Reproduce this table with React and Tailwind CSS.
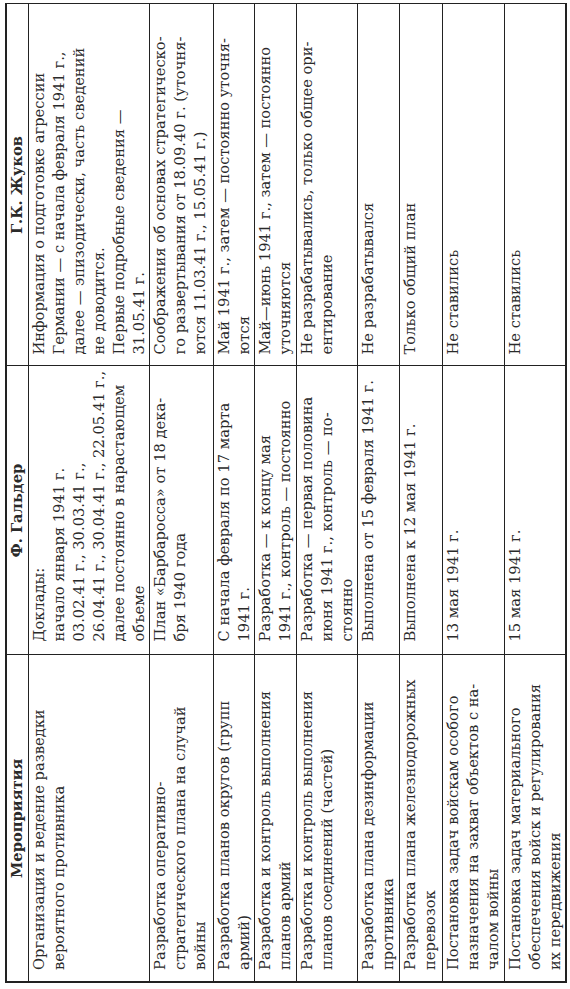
const rows = [
  {
    h: 'h-[121px]',
    m: ['Организация и ведение разведки', 'вероятного противника'],
    g: [
      'Доклады:',
      'начало января 1941 г.',
      '03.02.41 г., 30.03.41 г.,',
      '26.04.41 г., 30.04.41 г., 22.05.41 г.,',
      'далее постоянно в нарастающем',
      'объеме',
    ],
    z: [
      'Информация о подготовке агрессии',
      'Германии — с начала февраля 1941 г.,',
      'далее — эпизодически, часть сведений',
      'не доводится.',
      'Первые подробные сведения —',
      '31.05.41 г.',
    ],
  },
  {
    h: 'h-[64px]',
    m: ['Разработка оперативно-', 'стратегического плана на случай', 'войны'],
    g: ['План «Барбаросса» от 18 дека-', 'бря 1940 года'],
    z: [
      'Соображения об основах стратегическо-',
      'го развертывания от 18.09.40 г. (уточня-',
      'ются 11.03.41 г., 15.05.41 г.)',
    ],
  },
  {
    h: 'h-[41px]',
    m: ['Разработка планов округов (групп', 'армий)'],
    g: ['С начала февраля по 17 марта', '1941 г.'],
    z: ['Май 1941 г., затем — постоянно уточня-', 'ются'],
  },
  {
    h: 'h-[42px]',
    m: ['Разработка и контроль выполнения', 'планов армий'],
    g: ['Разработка — к концу мая', '1941 г., контроль — постоянно'],
    z: ['Май—июнь 1941 г., затем — постоянно', 'уточняются'],
  },
  {
    h: 'h-[61px]',
    m: ['Разработка и контроль выполнения', 'планов соединений (частей)'],
    g: ['Разработка — первая половина', 'июня 1941 г., контроль — по-', 'стоянно'],
    z: ['Не разрабатывались, только общее ори-', 'ентирование'],
  },
  {
    h: 'h-[42px]',
    m: ['Разработка плана дезинформации', 'противника'],
    g: ['Выполнена от 15 февраля 1941 г.'],
    z: ['Не разрабатывался'],
  },
  {
    h: 'h-[43px]',
    m: ['Разработка плана железнодорожных', 'перевозок'],
    g: ['Выполнена к 12 мая 1941 г.'],
    z: ['Только общий план'],
  },
  {
    h: 'h-[62px]',
    m: ['Постановка задач войскам особого', 'назначения на захват объектов с на-', 'чалом войны'],
    g: ['13 мая 1941 г.'],
    z: ['Не ставились'],
  },
  {
    h: 'h-[61px]',
    m: ['Постановка задач материального', 'обеспечения войск и регулирования', 'их передвижения'],
    g: ['15 мая 1941 г.'],
    z: ['Не ставились'],
  },
];

const Lines = ({ items }) => (
  <>
    {items.map((t, i) => (
      <span key={i} className="block whitespace-nowrap">
        {t}
      </span>
    ))}
  </>
);

const cell = 'border border-[#222] align-top pl-[11px] pr-2 py-0';

export default function App() {
  return (
    <div className="w-[570px] h-[989px] overflow-hidden bg-white">
      <div className="w-[989px] h-[570px] origin-top-left -rotate-90 translate-y-[989px] pl-[6px] pt-[5px]">
        <table className="table-fixed border-collapse w-[978px] border-2 border-r border-[#222] font-['DejaVu_Serif',serif] text-[14.7px] leading-5 text-[#2a2a2a]">
          <colgroup>
            <col className="w-[327px]" />
            <col className="w-[289px]" />
            <col className="w-[362px]" />
          </colgroup>
          <thead>
            <tr className="h-[22px]">
              <th className="border border-[#222] border-t-2 border-l-2 font-bold text-center align-middle p-0">Мероприятия</th>
              <th className="border border-[#222] border-t-2 font-bold text-center align-middle p-0">Ф. Гальдер</th>
              <th className="border border-[#222] border-t-2 font-bold text-center align-middle p-0">Г.К. Жуков</th>
            </tr>
          </thead>
          <tbody>
            {rows.map((r, i) => (
              <tr key={i} className={r.h}>
                <td className={cell + ' border-l-2'}>
                  <Lines items={r.m} />
                </td>
                <td className={cell + ' pl-[13px]'}>
                  <Lines items={r.g} />
                </td>
                <td className={cell}>
                  <Lines items={r.z} />
                </td>
              </tr>
            ))}
          </tbody>
        </table>
      </div>
    </div>
  );
}
